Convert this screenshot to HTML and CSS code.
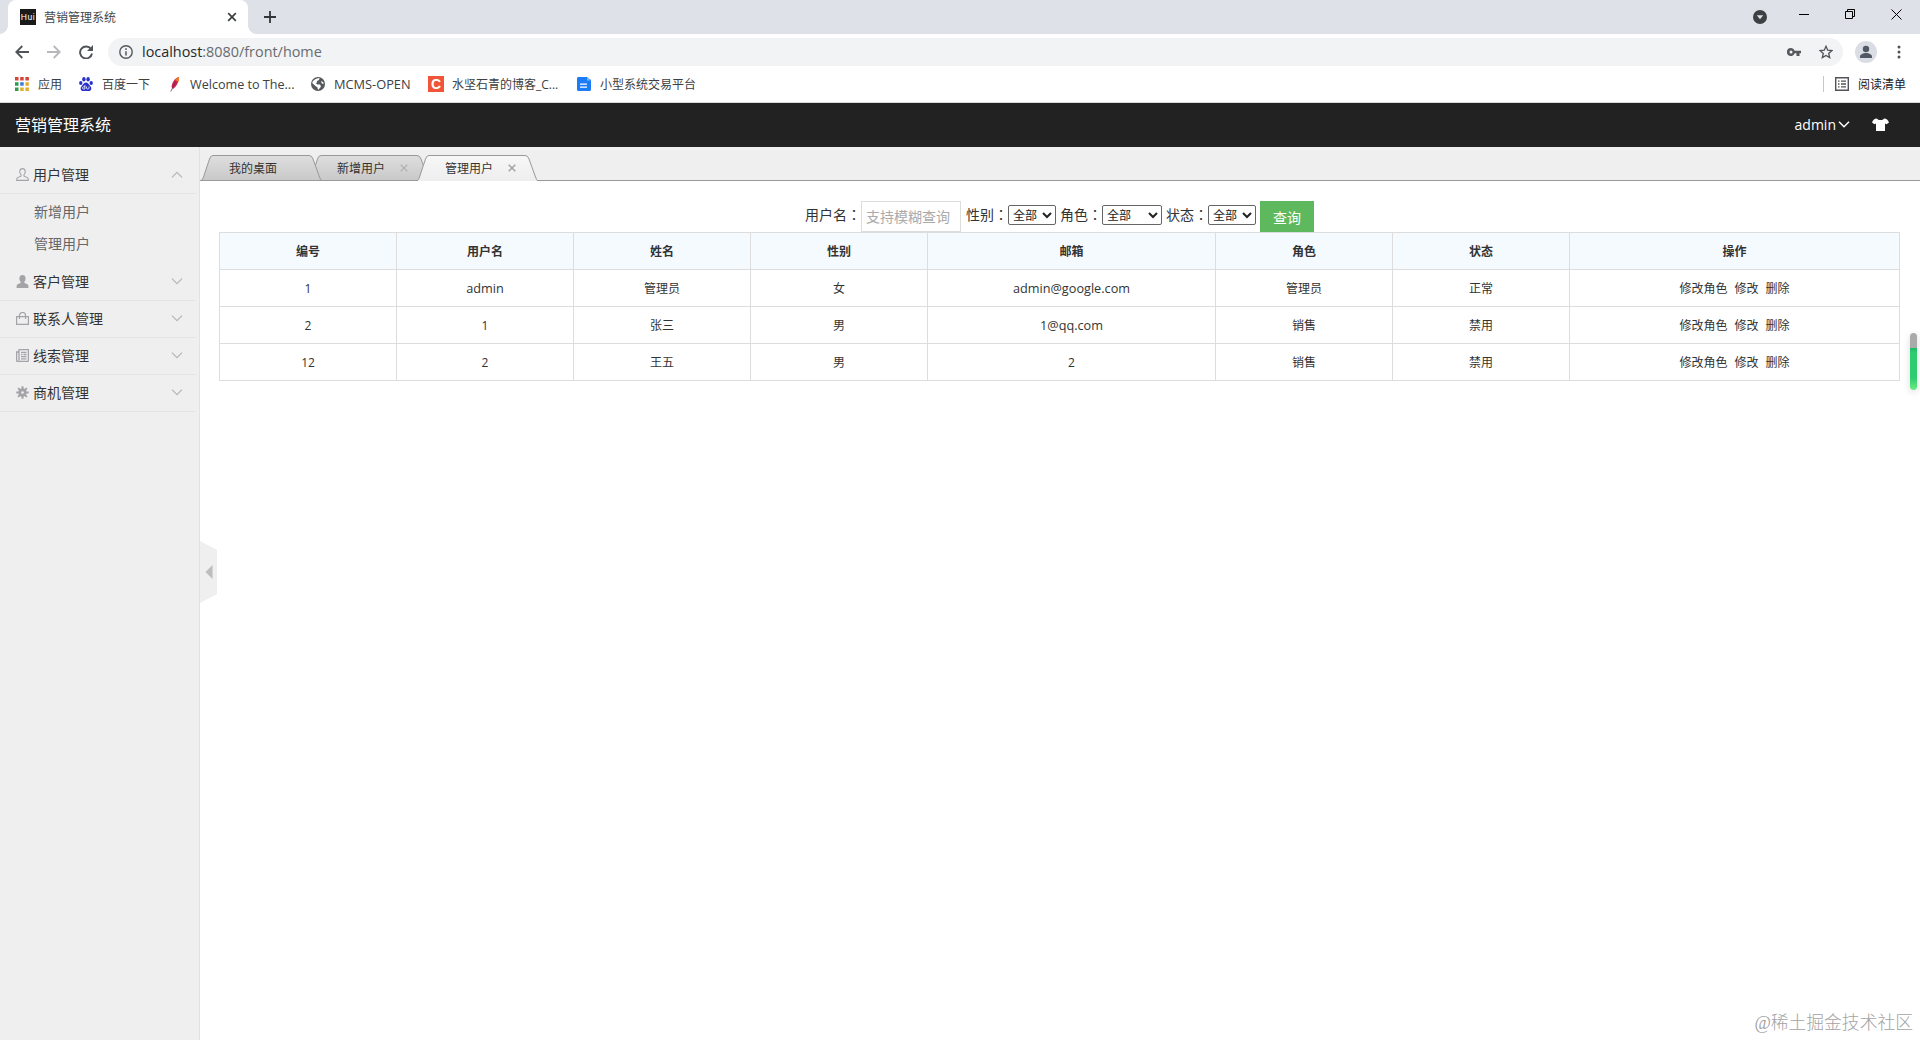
FILE: index.html
```
<!DOCTYPE html>
<html lang="zh-CN">
<head>
    <meta charset="utf-8">
    <title>营销管理系统</title>
    <link rel="stylesheet" href="styles.css">
</head>
<body>

    <!-- browser window -->
    <div class="tabstrip">
        <div class="browser_tab">
            <span class="favicon">Hui</span>
            <span class="browser_tab_title">营销管理系统</span>
            <svg width="10" height="10" viewBox="0 0 10 10"><path d="M1.2 1.2l7.6 7.6M8.8 1.2l-7.6 7.6" stroke="#3c4043" stroke-width="1.7"/></svg>
        </div>
        <svg class="new_tab" width="12" height="12" viewBox="0 0 12 12"><path d="M6 0v12M0 6h12" stroke="#333639" stroke-width="1.8"/></svg>
        <div class="window_buttons">
            <svg width="14" height="14" viewBox="0 0 14 14"><circle cx="7" cy="7" r="7" fill="#3c4043"/><path d="M3.8 5.2h6.4L7 9.3z" fill="#dee1e6"/></svg>
            <svg class="win_min" width="10" height="10" viewBox="0 0 10 10"><path d="M0 5.5h10" stroke="#000"/></svg>
            <svg class="win_max" width="10" height="10" viewBox="0 0 10 10"><path d="M.5 2.5h7v7h-7zM2.5 2.5v-2h7v7h-2" fill="none" stroke="#000"/></svg>
            <svg class="win_close" width="11" height="11" viewBox="0 0 11 11"><path d="M.5.5l10 10M10.5.5l-10 10" stroke="#000"/></svg>
        </div>
    </div>

    <div class="toolbar">
        <svg class="nav_back" width="14" height="14" viewBox="0 0 14 14"><path d="M14 7H1.5M7.3 1L1.3 7l6 6" fill="none" stroke="#505357" stroke-width="1.8"/></svg>
        <svg class="nav_forward" width="14" height="14" viewBox="0 0 14 14"><path d="M0 7h12.5M6.700 1l6 6-6 6" fill="none" stroke="#b6b8bb" stroke-width="1.8"/></svg>
        <svg class="nav_reload" width="14" height="14" viewBox="0 0 14 14"><path d="M12 4A6 6 0 1 0 13 8.500" fill="none" stroke="#505357" stroke-width="1.900"/><path d="M14 0v6H8z" fill="#505357"/></svg>
        <div class="omnibox">
            <svg width="14" height="14" viewBox="0 0 14 14"><circle cx="7" cy="7" r="6.200" fill="none" stroke="#55585c" stroke-width="1.400"/><path d="M7 6.200v4.200M7 3.300v1.600" stroke="#55585c" stroke-width="1.500"/></svg>
            <span class="url"><b>localhost</b>:8080/front/home</span>
            <svg class="omni_key" width="14" height="8" viewBox="0 0 14 8"><path d="M4 0a4 4 0 1 0 3.700 5.300H9.500V8h3V5.300H14V2.700H7.700A4 4 0 0 0 4 0zm0 2.500a1.500 1.500 0 1 1 0 3 1.500 1.500 0 0 1 0-3z" fill="#55585c" fill-rule="evenodd"/></svg>
            <svg class="omni_star" width="14" height="14" viewBox="0 0 14 14"><path d="M7 1.300l1.700 3.900 4.200.4-3.200 2.800 1 4.200L7 10.400l-3.700 2.200 1-4.200L1.100 5.600l4.200-.4z" fill="none" stroke="#505357" stroke-width="1.300"/></svg>
        </div>
        <svg class="profile" width="22" height="22" viewBox="0 0 22 22"><circle cx="11" cy="11" r="11" fill="#dadde4"/><circle cx="11" cy="8" r="3.200" fill="#505866"/><path d="M5 17v-1.500c0-2.300 3.500-3.500 6-3.500s6 1.200 6 3.500V17z" fill="#505866"/></svg>
        <svg class="menu_dots" width="4" height="14" viewBox="0 0 4 14"><circle cx="2" cy="2" r="1.500" fill="#505357"/><circle cx="2" cy="7" r="1.500" fill="#505357"/><circle cx="2" cy="12" r="1.500" fill="#505357"/></svg>
    </div>

    <div class="bookmarks">
        <div class="bookmark bookmark--apps">
            <svg width="14" height="14" viewBox="0 0 14 14">
                <path d="M0 0h3.500v3.500H0zM5.200 0h3.500v3.500H5.200zM10.400 0h3.500v3.500h-3.500z" fill="#d6453b"/>
                <path d="M0 5.200h3.500v3.500H0zM0 10.400h3.500v3.500H0z" fill="#2f9a50"/>
                <path d="M5.200 5.200h3.500v3.500H5.200z" fill="#3c7bdc"/>
                <path d="M10.400 5.200h3.500v3.500h-3.500zM5.200 10.400h3.500v3.500H5.200zM10.400 10.400h3.500v3.500h-3.500z" fill="#e0b02c"/>
            </svg>
            <span>应用</span>
        </div>
        <div class="bookmark bookmark--baidu">
            <svg width="14" height="14" viewBox="0 0 14 14" fill="#2932c8">
                <ellipse cx="1.800" cy="6" rx="1.700" ry="2.100"/><ellipse cx="4.900" cy="2.200" rx="1.700" ry="2.200"/><ellipse cx="9.100" cy="2.200" rx="1.700" ry="2.200"/><ellipse cx="12.200" cy="6" rx="1.700" ry="2.100"/>
                <path d="M7 5.500c1.800 0 2.500 1.800 4 3.200 2.500 2.300 1.200 5.300-1.200 5.300H4.200C1.800 14 .5 11 3 8.700c1.500-1.400 2.200-3.200 4-3.200z"/>
                <path d="M5.900 8v4H4.500c-1.400 0-1.400-2.200 0-2.200h1.400M7.500 9.500v1.800c0 .9 2.500.9 2.500 0V9.500" fill="none" stroke="#fff" stroke-width=".8"/>
            </svg>
            <span>百度一下</span>
        </div>
        <div class="bookmark bookmark--apache">
            <svg width="10" height="15" viewBox="0 0 10 15"><path d="M9 0C5 1 2 5 1.500 10L3 12c3-2 6-7 6-12z" fill="#c8244b"/><path d="M9 0C7.500.3 6 1.500 5 3l3.500 2C9 3 9.300 1 9 0z" fill="#e77a2c"/><path d="M5.500 5L.8 14.500" stroke="#7d2a68" stroke-width=".8"/></svg>
            <span>Welcome to The...</span>
        </div>
        <div class="bookmark bookmark--mcms">
            <svg width="14" height="14" viewBox="0 0 14 14"><circle cx="7" cy="7" r="7" fill="#55585c"/><path d="M6 1.500L8.500 1 8 3 6 4v1.500L4.500 6l2 1.500H9l1 2-1.500 2L7 13l-.5-2.500L4.500 9 1.200 6C1.500 4 3.500 2 6 1.500zM10 4l2 1 .8 2-2-.5z" fill="#fff"/></svg>
            <span>MCMS-OPEN</span>
        </div>
        <div class="bookmark bookmark--csdn">
            <i class="csdn_icon">C</i>
            <span>水坚石青的博客_C...</span>
        </div>
        <div class="bookmark bookmark--doc">
            <svg width="14" height="14" viewBox="0 0 14 14"><path d="M1.500 0H10l4 3v9.500c0 .8-.7 1.500-1.500 1.500h-11C.7 14 0 13.300 0 12.500v-11C0 .7.700 0 1.500 0z" fill="#1b7cf8"/><path d="M10 0l4 3.500h-4z" fill="#7eb6ff"/><path d="M3 7.200h7M3 10.200h7" stroke="#fff" stroke-width="1.200"/></svg>
            <span>小型系统交易平台</span>
        </div>
        <div class="reading_list">
            <svg width="14" height="14" viewBox="0 0 14 14"><path d="M.7.7h12.600v12.600H.7z" fill="none" stroke="#505357" stroke-width="1.400"/><path d="M3 4.200h1.500M6 4.200h5M3 7h1.500M6 7h5M3 9.800h1.500M6 9.800h5" stroke="#505357" stroke-width="1.300"/></svg>
            <span>阅读清单</span>
        </div>
    </div>

    <!-- page -->
    <header class="navbar">
        <span class="logo">营销管理系统</span>
        <div class="user_menu">
            <span>admin</span>
            <svg class="user_arrow" width="12" height="7" viewBox="0 0 12 7"><path d="M1 .8l5 5 5-5" fill="none" stroke="#fff" stroke-width="1.500"/></svg>
            <svg class="skin" width="17" height="13" viewBox="0 0 17 13"><path d="M5 .5C6 2.500 11 2.500 12 .5c2.500.3 4 1.300 5 4l-2.500 1.700L13 5.500V13H4V5.500l-1.500.7L0 4.500c1-2.700 2.500-3.700 5-4z" fill="#fff"/></svg>
        </div>
    </header>

    <div class="layout">
        <aside class="sidebar">
            <dl class="menu menu--open">
                <dt>
                    <svg width="13" height="13" viewBox="0 0 13 13"><path d="M6.500.6c3.500 0 3.300 4.500 1.500 6v1.300c0 1 4.300.8 4.300 3.200v1.300H.7v-1.300C.7 8.700 5 8.900 5 7.900V6.600C3.200 5.100 3 .6 6.500.6z" fill="none" stroke="#a3a3a8" stroke-width="1.100"/></svg>
                    <span>用户管理</span>
                    <svg class="menu_arrow" width="12" height="7" viewBox="0 0 12 7"><path d="M1 6.300l5-5 5 5" fill="none" stroke="#b6b6b6" stroke-width="1.200"/></svg>
                </dt>
                <dd>
                    <a>新增用户</a>
                    <a>管理用户</a>
                </dd>
            </dl>
            <dl class="menu">
                <dt>
                    <svg width="13" height="13" viewBox="0 0 13 13"><path d="M6.500 0c3.900 0 3.600 5 1.900 6.700v1c0 1 4 .8 4 3.300v2H.6v-2c0-2.500 4-2.300 4-3.300v-1C2.900 5 2.600 0 6.500 0z" fill="#a3a3a8"/></svg>
                    <span>客户管理</span>
                    <svg class="menu_arrow" width="12" height="7" viewBox="0 0 12 7"><path d="M1 .7l5 5 5-5" fill="none" stroke="#b6b6b6" stroke-width="1.200"/></svg>
                </dt>
            </dl>
            <dl class="menu">
                <dt>
                    <svg width="13" height="13" viewBox="0 0 13 13"><path d="M.6 4.600h11.800v7.800H.6zM3.500 7V3.500c0-4 6-4 6 0V7" fill="none" stroke="#a3a3a8" stroke-width="1.200"/></svg>
                    <span>联系人管理</span>
                    <svg class="menu_arrow" width="12" height="7" viewBox="0 0 12 7"><path d="M1 .7l5 5 5-5" fill="none" stroke="#b6b6b6" stroke-width="1.200"/></svg>
                </dt>
            </dl>
            <dl class="menu">
                <dt>
                    <svg width="13" height="13" viewBox="0 0 13 13"><path d="M3 .6h9.400v10.800c0 .6-.4 1-1 1H1.600c-.6 0-1-.4-1-1V3H3zM3 3v8.500M5 3.300h5.500M7.500 5.500h3M5 7.700h5.500M5 9.900h5.500M5 5.500h1.500" fill="none" stroke="#a3a3a8" stroke-width="1.300"/></svg>
                    <span>线索管理</span>
                    <svg class="menu_arrow" width="12" height="7" viewBox="0 0 12 7"><path d="M1 .7l5 5 5-5" fill="none" stroke="#b6b6b6" stroke-width="1.200"/></svg>
                </dt>
            </dl>
            <dl class="menu">
                <dt>
                    <svg width="13" height="13" viewBox="0 0 13 13"><path d="M6.500.3v12.400M.3 6.500h12.400M2.100 2.100l8.800 8.800M10.900 2.100l-8.800 8.800" stroke="#a3a3a8" stroke-width="2"/><circle cx="6.500" cy="6.500" r="3.300" fill="none" stroke="#a3a3a8" stroke-width="1.800"/><circle cx="6.500" cy="6.500" r="1.300" fill="#efeff0"/></svg>
                    <span>商机管理</span>
                    <svg class="menu_arrow" width="12" height="7" viewBox="0 0 12 7"><path d="M1 .7l5 5 5-5" fill="none" stroke="#b6b6b6" stroke-width="1.200"/></svg>
                </dt>
            </dl>
        </aside>

        <main class="content">
            <svg class="fold" width="17" height="62" viewBox="0 0 17 62"><path d="M0 0l17 9v44L0 62z" fill="#efefef"/><path d="M12.500 24v14l-7-7z" fill="#bdbdbd"/></svg>

            <nav class="page_tabs">
                <svg width="0" height="0" class="defs">
                    <linearGradient id="tab_grey" x1="0" y1="0" x2="0" y2="1"><stop offset="0" stop-color="#dedede"/><stop offset="1" stop-color="#c9c9c9"/></linearGradient>
                    <linearGradient id="tab_light" x1="0" y1="0" x2="0" y2="1"><stop offset="0" stop-color="#f7f7f7"/><stop offset="1" stop-color="#eeeeee"/></linearGradient>
                </svg>
                <div class="page_tab page_tab--home">
                    <svg class="tab_shape" width="121" height="26" viewBox="0 0 121 26"><path d="M0 25.500Q1.500 25 2.500 22L8.500 4Q9.500.5 12 .5h96q3 0 4 3.500L118.500 22q1 3 2.500 3.500z" fill="url(#tab_grey)" stroke="#999"/></svg>
                    <span>我的桌面</span>
                </div>
                <div class="page_tab">
                    <svg class="tab_shape" width="121" height="26" viewBox="0 0 121 26"><path d="M0 25.500Q1.500 25 2.500 22L8.500 4Q9.500.5 12 .5h96q3 0 4 3.500L118.500 22q1 3 2.500 3.500z" fill="url(#tab_grey)" stroke="#999"/></svg>
                    <span>新增用户</span>
                    <svg class="tab_close" width="8" height="8" viewBox="0 0 8 8"><path d="M.7.7l6.600 6.600M7.300.7L.7 7.300" stroke="#adadad" stroke-width="1.100"/></svg>
                </div>
                <div class="page_tab page_tab--active">
                    <svg class="tab_shape" width="121" height="26" viewBox="0 0 121 26"><path d="M0 26Q1.500 25 2.500 22L8.500 4Q9.500.5 12 .5h96q3 0 4 3.500L118.500 22q1 3 2.500 4" fill="url(#tab_light)" stroke="#999"/></svg>
                    <span>管理用户</span>
                    <svg class="tab_close" width="8" height="8" viewBox="0 0 8 8"><path d="M.7.7l6.600 6.600M7.300.7L.7 7.300" stroke="#a2a2a2" stroke-width="1.500"/></svg>
                </div>
            </nav>

            <section class="page_body">
                <form class="search">
                    <label>用户名<span class="colon" lang="zh-Hant">：</span></label>
                    <input class="search_input" type="text" placeholder="支持模糊查询">
                    <label>性别<span class="colon" lang="zh-Hant">：</span></label>
                    <select class="search_select"><option>全部</option><option>男</option><option>女</option></select>
                    <label>角色<span class="colon" lang="zh-Hant">：</span></label>
                    <select class="search_select search_select--role"><option>全部</option><option>管理员</option><option>销售</option></select>
                    <label>状态<span class="colon" lang="zh-Hant">：</span></label>
                    <select class="search_select"><option>全部</option><option>正常</option><option>禁用</option></select>
                    <button class="search_button" type="button">查询</button>
                </form>

                <table class="users">
                    <colgroup>
                        <col class="col_normal"><col class="col_normal"><col class="col_normal"><col class="col_normal">
                        <col class="col_mail"><col class="col_normal"><col class="col_normal"><col class="col_actions">
                    </colgroup>
                    <thead>
                        <tr><th>编号</th><th>用户名</th><th>姓名</th><th>性别</th><th>邮箱</th><th>角色</th><th>状态</th><th>操作</th></tr>
                    </thead>
                    <tbody>
                        <tr>
                            <td>1</td><td class="latin">admin</td><td>管理员</td><td>女</td><td class="latin">admin@google.com</td><td>管理员</td><td>正常</td>
                            <td class="actions"><a>修改角色</a><a>修改</a><a>删除</a></td>
                        </tr>
                        <tr>
                            <td>2</td><td>1</td><td>张三</td><td>男</td><td class="latin">1@qq.com</td><td>销售</td><td>禁用</td>
                            <td class="actions"><a>修改角色</a><a>修改</a><a>删除</a></td>
                        </tr>
                        <tr>
                            <td>12</td><td>2</td><td>王五</td><td>男</td><td>2</td><td>销售</td><td>禁用</td>
                            <td class="actions"><a>修改角色</a><a>修改</a><a>删除</a></td>
                        </tr>
                    </tbody>
                </table>
            </section>

            <div class="side_meter"></div>
            <div class="watermark">@稀土掘金技术社区</div>
        </main>
    </div>

</body>
</html>
```

FILE: styles.css
```
* {
    box-sizing: border-box;
}

body {
    margin: 0;
    height: 1040px;
    display: flex;
    flex-direction: column;
    overflow: hidden;
    background-color: #fff;
    color: #333;
    font-family: "Open Sans", "Noto Sans CJK SC", sans-serif;
    font-size: 12px;
}

svg {
    display: block;
    flex: none;
}

/* browser window */
.tabstrip {
    height: 34px;
    flex: none;
    display: flex;
    align-items: center;
    padding-left: 8px;
    background-color: #dee1e8;
}

.browser_tab {
    position: relative;
    width: 240px;
    height: 34px;
    display: flex;
    align-items: center;
    padding: 0 11px 0 12px;
    border-radius: 8px 8px 0 0;
    background-color: #fff;
}

/* flared feet of the tab */
.browser_tab::before,
.browser_tab::after {
    content: "";
    position: absolute;
    bottom: 0;
    width: 8px;
    height: 8px;
}

.browser_tab::before {
    left: -8px;
    background: radial-gradient(circle at 0 0, #dee1e8 7.5px, #fff 8px);
}

.browser_tab::after {
    right: -8px;
    background: radial-gradient(circle at 100% 0, #dee1e8 7.5px, #fff 8px);
}

.favicon {
    width: 16px;
    height: 16px;
    background-color: #1a1a1a;
    color: #fff;
    font: 8.5px/17px "Liberation Sans", sans-serif;
    letter-spacing: .5px;
    text-align: center;
}

.browser_tab_title {
    flex: 1;
    margin-left: 8px;
    color: #45484c;
}

.new_tab {
    margin-left: 16px;
}

.window_buttons {
    margin-left: auto;
    display: flex;
    align-items: center;
    padding: 0 18px 6px 0;
}

.window_buttons svg:first-child {
    margin-top: 6px;
}

.win_min {
    margin-left: 32px;
}

.win_max {
    margin-left: 36px;
}

.win_close {
    margin-left: 36px;
}

.toolbar {
    height: 35px;
    flex: none;
    display: flex;
    align-items: center;
    padding: 0 19px 0 15px;
}

.nav_forward,
.nav_reload {
    margin-left: 18px;
}

.omnibox {
    flex: 1;
    height: 28px;
    display: flex;
    align-items: center;
    margin-left: 15px;
    padding: 0 10px 0 11px;
    border-radius: 14px;
    background-color: #f1f3f4;
}

.url {
    flex: 1;
    margin-left: 9px;
    color: #686c71;
    font-size: 14.4px;
}

.url b {
    color: #26282b;
    font-weight: normal;
}

.omni_star {
    margin-left: 18px;
}

.profile {
    margin-left: 12px;
}

.menu_dots {
    margin-left: 20px;
}

.bookmarks {
    height: 34px;
    flex: none;
    display: flex;
    align-items: center;
    padding: 0 14px 3px 15px;
    border-bottom: 1px solid #d8dadd;
    color: #3c4043;
}

.bookmark {
    display: flex;
    align-items: center;
    gap: 9px;
    white-space: nowrap;
}

.bookmark--apps {
    width: 64px;
}

.bookmark--baidu {
    width: 91px;
}

.bookmark--apache {
    width: 141px;
    gap: 10px;
    font-size: 12.6px;
}

.bookmark--mcms {
    width: 117px;
    font-size: 12.8px;
}

.bookmark--csdn {
    width: 149px;
    gap: 8px;
}

.csdn_icon {
    width: 16px;
    height: 16px;
    background-color: #f0553a;
    color: #fff;
    font: bold 14px/16px "Liberation Sans", sans-serif;
    text-align: center;
}

.reading_list {
    margin-left: auto;
    display: flex;
    align-items: center;
    gap: 9px;
    height: 16px;
    padding-left: 11px;
    border-left: 1px solid #c6c8cb;
    color: #202124;
}

/* page header */
.navbar {
    height: 44px;
    flex: none;
    display: flex;
    align-items: center;
    justify-content: space-between;
    padding: 0 31px 2px 15px;
    background-color: #222;
    color: #fff;
}

.logo {
    font-size: 16px;
}

.user_menu {
    display: flex;
    align-items: center;
    font-size: 14px;
}

.user_arrow {
    margin-left: 2px;
}

.skin {
    margin-left: 22px;
}

.layout {
    flex: 1;
    min-height: 0;
    display: flex;
}

/* left menu */
.sidebar {
    width: 200px;
    flex: none;
    padding-top: 10px;
    border-right: 1px solid #e2e2e2;
    background-color: #efeff0;
}

.menu {
    margin: 0;
}

.menu dt {
    height: 37px;
    display: flex;
    align-items: center;
    margin-right: 3px;
    padding: 0 13px 2px 16px;
    border-bottom: 1px solid #e3e4e5;
    color: #333;
    font-size: 14px;
}

.menu dt span {
    flex: 1;
    margin-left: 4px;
}

.menu dd {
    display: flex;
    flex-direction: column;
    height: 70px;
    margin: 0;
    padding: 2px 0 4px 34px;
}

.menu dd a {
    color: #666;
    font-size: 14px;
    line-height: 32px;
}

/* tabs of the opened pages */
.content {
    position: relative;
    flex: 1;
    min-width: 0;
}

.page_tabs {
    height: 34px;
    display: flex;
    align-items: flex-end;
    padding-left: 1px;
    background-color: #efeff0;
    box-shadow: inset 0 -1px #999;
}

.defs {
    position: absolute;
}

.page_tab {
    position: relative;
    width: 108px;
    height: 26px;
    display: flex;
    align-items: center;
    padding-left: 28px;
    color: #333;
}

.page_tab--home {
    z-index: 1;
}

.page_tab--active {
    z-index: 2;
}

.page_tab span {
    position: relative;
    width: 62px;
}

.tab_shape {
    position: absolute;
    left: 0;
    top: 0;
}

.tab_close {
    position: relative;
    margin-left: 1px;
}

.page_body {
    padding: 20px 20px 0 19px;
}

/* search bar */
.search {
    display: flex;
    justify-content: center;
    align-items: center;
    height: 31px;
    font-size: 14px;
}

.search label {
    width: 42px;
    white-space: nowrap;
    margin-top: -5px;
}

.search label:first-child {
    width: 56px;
}

/* full width colon in the middle of its box */
.colon {
    font-family: "Noto Sans CJK TC", sans-serif;
}

.search_input {
    width: 100px;
    height: 31px;
    margin-right: 5px;
    padding: 0 4px;
    border: 1px solid #ddd;
    color: #333;
    font-family: inherit;
    font-size: 14px;
}

.search_input::placeholder {
    color: #aaa;
}

.search_select {
    width: 48px;
    height: 20px;
    margin: -3px 4px 0 0;
    padding: 0;
    border: 1px solid #666;
    border-radius: 2px;
    background-color: #fff;
    color: #222;
    font-family: inherit;
    font-size: 12px;
}

.search_select--role {
    width: 60px;
}

.search_button {
    width: 54px;
    height: 31px;
    padding: 0;
    border: 0;
    background-color: #5eb95e;
    color: #fff;
    font-family: inherit;
    font-size: 14px;
}

/* user list */
.users {
    width: 1681px;
    table-layout: fixed;
    border-collapse: collapse;
    color: #333;
    text-align: center;
}

.users th,
.users td {
    height: 37px;
    padding: 0;
    border: 1px solid #ddd;
}

.users th {
    background-color: #f5fafe;
    font-weight: bold;
}

.users .latin {
    font-size: 12.7px;
}

.col_normal {
    width: 177px;
}

.col_mail {
    width: 288px;
}

.col_actions {
    width: 330px;
}

.actions a + a {
    margin-left: 7px;
}

/* fold handle of the left menu */
.fold {
    position: absolute;
    left: 0;
    top: 394px;
}

.side_meter {
    position: absolute;
    right: 3px;
    top: 186px;
    width: 7px;
    height: 57px;
    border-radius: 4px;
    background: linear-gradient(#aaa 15px, #20b868 15px, #2ecc71 20px, #2ecc71 45px, #6cec83);
    box-shadow: 0 2px 7px rgba(0, 0, 0, .14);
}

.watermark {
    position: absolute;
    right: 7px;
    bottom: 4px;
    color: #a3a3a3;
    font: 300 17.8px/26px "Liberation Serif", "Noto Sans CJK SC", serif;
}
```
